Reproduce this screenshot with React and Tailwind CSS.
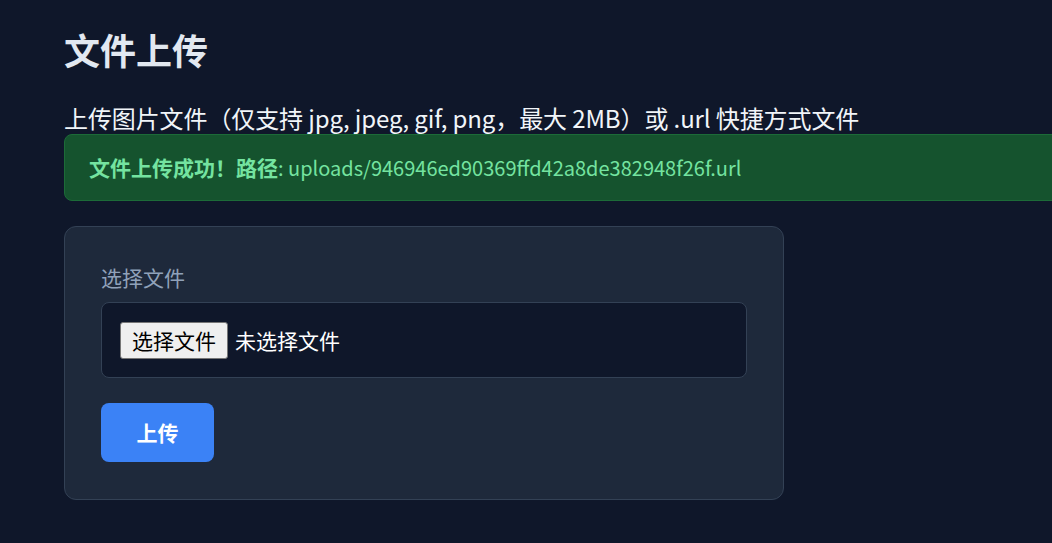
export default function App() {
  return (
    <div
      className="min-h-screen w-full overflow-hidden bg-[#0f172a] text-slate-200"
      style={{ fontFamily: '"Noto Sans CJK SC", "Noto Sans", sans-serif' }}
    >
      <div className="pl-16 pt-[29px] pb-10">
        <h1 className="mb-[33px] text-[36px] font-bold leading-[40px] text-slate-200">
          文件上传
        </h1>
        <h2 className="text-[24px] font-normal leading-[32px] tracking-[-0.1px] text-slate-100 whitespace-nowrap">
          上传图片文件（仅支持 jpg, jpeg, gif, png，最大 2MB）或 .url 快捷方式文件
        </h2>

        {/* status banner */}
        <div className="w-[1100px] rounded-lg border border-[#1c6b38] bg-[#15532e] px-6 py-[18px] text-[21px] leading-[29px] text-[#74e3a0] whitespace-nowrap">
          <span className="font-bold">文件上传成功！路径</span>
          <span className="text-[20px]">: uploads/946946ed90369ffd42a8de382948f26f.url</span>
        </div>

        {/* upload form */}
        <form
          className="mt-[25px] w-[720px] rounded-xl border border-[#334155] bg-[#1e293b] px-9 pt-9 pb-[37px]"
          onSubmit={(e) => e.preventDefault()}
        >
          <label className="mb-[10px] block text-[21px] leading-[29px] text-slate-400">
            选择文件
          </label>
          <div className="flex h-[76px] items-center rounded-lg border border-[#334155] bg-[#0f172a] px-[18px]">
            <button
              type="button"
              className="h-[37px] rounded-[3px] border border-[#767676] bg-[#efefef] px-[11px] text-[21px] leading-[29px] text-black"
            >
              选择文件
            </button>
            <span className="ml-[7px] text-[21px] leading-[29px] text-white">未选择文件</span>
          </div>
          <button
            type="submit"
            className="mt-[25px] h-[59px] w-[113px] rounded-lg bg-[#3b82f6] text-[21px] font-bold text-white"
          >
            上传
          </button>
        </form>
      </div>
    </div>
  );
}
